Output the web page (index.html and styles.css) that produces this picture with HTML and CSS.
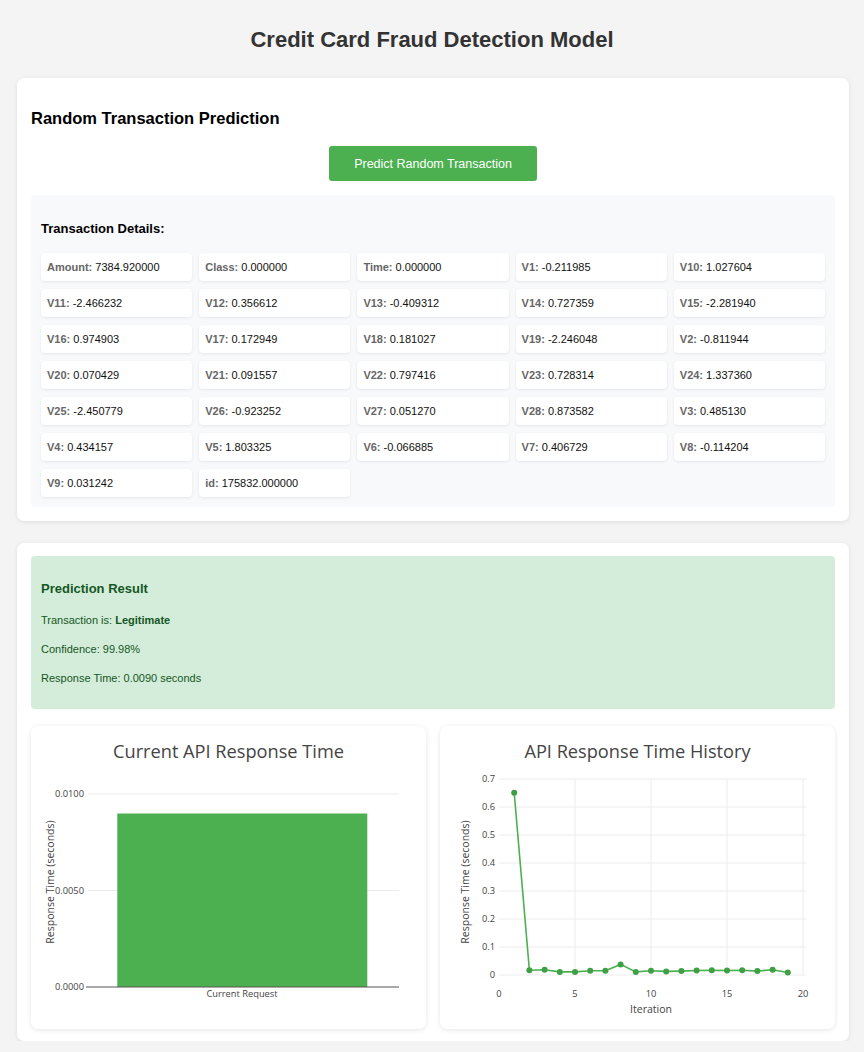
FILE: index.html
```html
<!DOCTYPE html>
<html lang="en">
<head>
<meta charset="utf-8">
<title>Credit Card Fraud Detection Model</title>
<link rel="stylesheet" href="styles.css">
</head>
<body>
<h1 class="page-title">Credit Card Fraud Detection Model</h1>
<div class="container">
  <section class="card">
    <h2 class="card-title">Random Transaction Prediction</h2>
    <div class="btn-row"><button class="btn">Predict Random Transaction</button></div>
    <div class="details">
      <h3 class="details-title">Transaction Details:</h3>
      <div class="grid">
        <div class="cell"><strong>Amount:</strong>&nbsp;7384.920000</div>
        <div class="cell"><strong>Class:</strong>&nbsp;0.000000</div>
        <div class="cell"><strong>Time:</strong>&nbsp;0.000000</div>
        <div class="cell"><strong>V1:</strong>&nbsp;-0.211985</div>
        <div class="cell"><strong>V10:</strong>&nbsp;1.027604</div>
        <div class="cell"><strong>V11:</strong>&nbsp;-2.466232</div>
        <div class="cell"><strong>V12:</strong>&nbsp;0.356612</div>
        <div class="cell"><strong>V13:</strong>&nbsp;-0.409312</div>
        <div class="cell"><strong>V14:</strong>&nbsp;0.727359</div>
        <div class="cell"><strong>V15:</strong>&nbsp;-2.281940</div>
        <div class="cell"><strong>V16:</strong>&nbsp;0.974903</div>
        <div class="cell"><strong>V17:</strong>&nbsp;0.172949</div>
        <div class="cell"><strong>V18:</strong>&nbsp;0.181027</div>
        <div class="cell"><strong>V19:</strong>&nbsp;-2.246048</div>
        <div class="cell"><strong>V2:</strong>&nbsp;-0.811944</div>
        <div class="cell"><strong>V20:</strong>&nbsp;0.070429</div>
        <div class="cell"><strong>V21:</strong>&nbsp;0.091557</div>
        <div class="cell"><strong>V22:</strong>&nbsp;0.797416</div>
        <div class="cell"><strong>V23:</strong>&nbsp;0.728314</div>
        <div class="cell"><strong>V24:</strong>&nbsp;1.337360</div>
        <div class="cell"><strong>V25:</strong>&nbsp;-2.450779</div>
        <div class="cell"><strong>V26:</strong>&nbsp;-0.923252</div>
        <div class="cell"><strong>V27:</strong>&nbsp;0.051270</div>
        <div class="cell"><strong>V28:</strong>&nbsp;0.873582</div>
        <div class="cell"><strong>V3:</strong>&nbsp;0.485130</div>
        <div class="cell"><strong>V4:</strong>&nbsp;0.434157</div>
        <div class="cell"><strong>V5:</strong>&nbsp;1.803325</div>
        <div class="cell"><strong>V6:</strong>&nbsp;-0.066885</div>
        <div class="cell"><strong>V7:</strong>&nbsp;0.406729</div>
        <div class="cell"><strong>V8:</strong>&nbsp;-0.114204</div>
        <div class="cell"><strong>V9:</strong>&nbsp;0.031242</div>
        <div class="cell"><strong>id:</strong>&nbsp;175832.000000</div>
      </div>
    </div>
  </section>

  <section class="card card-result">
    <div class="result">
      <h3 class="result-title">Prediction Result</h3>
      <p class="result-line">Transaction is: <strong>Legitimate</strong></p>
      <p class="result-line">Confidence: 99.98%</p>
      <p class="result-line last">Response Time: 0.0090 seconds</p>
    </div>
    <div class="charts">
      <div class="chart-card">
        <svg class="chart" width="395" height="303" viewBox="0 0 395 303">
          <text class="ct-title" x="197.5" y="32" text-anchor="middle">Current API Response Time</text>
          <line class="grid-line" x1="57" x2="368" y1="68" y2="68"/>
          <line class="grid-line" x1="57" x2="368" y1="164.5" y2="164.5"/>
          <rect x="86.3" y="87.5" width="250" height="173.5" fill="#4caf50"/>
          <line class="axis-line" x1="55" x2="368" y1="261" y2="261"/>
          <text class="tick" x="53" y="71.3" text-anchor="end">0.0100</text>
          <text class="tick" x="53" y="167.8" text-anchor="end">0.0050</text>
          <text class="tick" x="53" y="264.3" text-anchor="end">0.0000</text>
          <text class="tick" x="211" y="270.5" text-anchor="middle">Current Request</text>
          <text class="ax-title" transform="translate(23,156) rotate(-90)" text-anchor="middle">Response Time (seconds)</text>
        </svg>
      </div>
      <div class="chart-card">
        <svg class="chart" width="395" height="303" viewBox="0 0 395 303">
          <text class="ct-title" x="197.5" y="32" text-anchor="middle">API Response Time History</text>
          <line class="grid-line" x1="59" x2="366" y1="53" y2="53"/>
          <line class="grid-line" x1="59" x2="366" y1="81" y2="81"/>
          <line class="grid-line" x1="59" x2="366" y1="109" y2="109"/>
          <line class="grid-line" x1="59" x2="366" y1="137" y2="137"/>
          <line class="grid-line" x1="59" x2="366" y1="165" y2="165"/>
          <line class="grid-line" x1="59" x2="366" y1="193" y2="193"/>
          <line class="grid-line" x1="59" x2="366" y1="221" y2="221"/>
          <line class="grid-line" x1="59" x2="366" y1="249" y2="249"/>
          <line class="grid-line" x1="135" x2="135" y1="53" y2="249"/>
          <line class="grid-line" x1="211" x2="211" y1="53" y2="249"/>
          <line class="grid-line" x1="287" x2="287" y1="53" y2="249"/>
          <line class="grid-line" x1="363" x2="363" y1="53" y2="249"/>
          <text class="tick" x="55" y="56.3" text-anchor="end">0.7</text>
          <text class="tick" x="55" y="84.3" text-anchor="end">0.6</text>
          <text class="tick" x="55" y="112.3" text-anchor="end">0.5</text>
          <text class="tick" x="55" y="140.3" text-anchor="end">0.4</text>
          <text class="tick" x="55" y="168.3" text-anchor="end">0.3</text>
          <text class="tick" x="55" y="196.3" text-anchor="end">0.2</text>
          <text class="tick" x="55" y="224.3" text-anchor="end">0.1</text>
          <text class="tick" x="55" y="252.3" text-anchor="end">0</text>
          <text class="tick" x="59" y="270.5" text-anchor="middle">0</text>
          <text class="tick" x="135" y="270.5" text-anchor="middle">5</text>
          <text class="tick" x="211" y="270.5" text-anchor="middle">10</text>
          <text class="tick" x="287" y="270.5" text-anchor="middle">15</text>
          <text class="tick" x="363" y="270.5" text-anchor="middle">20</text>
          <text class="ax-title" x="211" y="287" text-anchor="middle">Iteration</text>
          <text class="ax-title" transform="translate(29,156) rotate(-90)" text-anchor="middle">Response Time (seconds)</text>
          <polyline class="series" points="74.2,66.7 89.4,244.2 104.6,243.7 119.8,245.9 135,245.9 150.2,244.8 165.4,244.8 180.6,238.4 195.8,245.9 211,244.8 226.2,245.4 241.4,245.1 256.6,244.5 271.8,244.2 287,244.5 302.2,244.2 317.4,245.1 332.6,243.7 347.8,246.5"/>
          <g class="dots">
            <circle cx="74.2" cy="66.7" r="3"/>
            <circle cx="89.4" cy="244.2" r="3"/>
            <circle cx="104.6" cy="243.7" r="3"/>
            <circle cx="119.8" cy="245.9" r="3"/>
            <circle cx="135" cy="245.9" r="3"/>
            <circle cx="150.2" cy="244.8" r="3"/>
            <circle cx="165.4" cy="244.8" r="3"/>
            <circle cx="180.6" cy="238.4" r="3"/>
            <circle cx="195.8" cy="245.9" r="3"/>
            <circle cx="211" cy="244.8" r="3"/>
            <circle cx="226.2" cy="245.4" r="3"/>
            <circle cx="241.4" cy="245.1" r="3"/>
            <circle cx="256.6" cy="244.5" r="3"/>
            <circle cx="271.8" cy="244.2" r="3"/>
            <circle cx="287" cy="244.5" r="3"/>
            <circle cx="302.2" cy="244.2" r="3"/>
            <circle cx="317.4" cy="245.1" r="3"/>
            <circle cx="332.6" cy="243.7" r="3"/>
            <circle cx="347.8" cy="246.5" r="3"/>
          </g>
        </svg>
      </div>
    </div>
  </section>
</div>
</body>
</html>
```

FILE: styles.css
```css
* { box-sizing: border-box; }

html, body {
  margin: 0;
  padding: 0;
}

body {
  background: #f4f4f4;
  font-family: "Liberation Sans", Arial, Helvetica, sans-serif;
  color: #222;
}

.page-title {
  margin: 0;
  padding: 27px 0 25px;
  text-align: center;
  font-size: 22px;
  line-height: 26px;
  font-weight: bold;
  color: #333;
}

.container {
  width: 832px;
  margin-left: 17px;
}

.card {
  background: #fff;
  border-radius: 7px;
  box-shadow: 0 1px 5px rgba(0, 0, 0, 0.09);
  padding: 14px;
}

.card-title {
  margin: 16px 0 18px;
  font-size: 16.5px;
  line-height: 20px;
  font-weight: bold;
  color: #000;
}

.btn-row {
  display: flex;
  justify-content: center;
}

.btn {
  width: 208px;
  height: 35px;
  border: 0;
  border-radius: 3px;
  background: #4caf50;
  color: #fff;
  font-family: "Liberation Sans", Arial, sans-serif;
  font-size: 12.5px;
  padding: 0;
  cursor: pointer;
}

.details {
  margin-top: 14px;
  background: #f8f9fa;
  border-radius: 4px;
  padding: 10px;
}

.details-title {
  margin: 16px 0 16px;
  font-size: 13px;
  line-height: 16px;
  font-weight: bold;
  color: #000;
}

.grid {
  display: grid;
  grid-template-columns: repeat(5, 1fr);
  gap: 8px 7px;
}

.cell {
  height: 28px;
  display: flex;
  align-items: center;
  padding: 0 6px;
  background: #fff;
  border-radius: 4px;
  box-shadow: 0 1px 3px rgba(0, 0, 0, 0.08);
  font-size: 11px;
  color: #111;
  white-space: nowrap;
}

.cell strong {
  color: #666;
  font-weight: bold;
}

.card-result {
  margin-top: 22px;
  padding: 13px 14px 12px;
}

.result {
  background: #d4edda;
  color: #155724;
  border-radius: 4px;
  padding: 10px;
}

.result-title {
  margin: 15px 0 17px;
  font-size: 13px;
  line-height: 16px;
  font-weight: bold;
}

.result-line {
  margin: 0 0 16px;
  font-size: 11px;
  line-height: 13px;
}

.result-line.last {
  margin-bottom: 14px;
}

.charts {
  margin-top: 17px;
  display: grid;
  grid-template-columns: 395px 395px;
  gap: 14px;
}

.chart-card {
  background: #fff;
  border-radius: 7px;
  box-shadow: 0 1px 5px rgba(0, 0, 0, 0.1);
  height: 303px;
}

.chart {
  display: block;
  font-family: "Open Sans", "DejaVu Sans", sans-serif;
}

.ct-title {
  font-size: 18.2px;
  fill: #444;
}

.tick {
  font-size: 9.3px;
  fill: #444;
}

.ax-title {
  font-size: 10.5px;
  fill: #444;
}

.grid-line {
  stroke: #ececec;
  stroke-width: 1;
}

.axis-line {
  stroke: #555;
  stroke-width: 1;
}

.series {
  fill: none;
  stroke: #4caf50;
  stroke-width: 1.6;
}

.dots circle {
  fill: #3f9f44;
}
```
